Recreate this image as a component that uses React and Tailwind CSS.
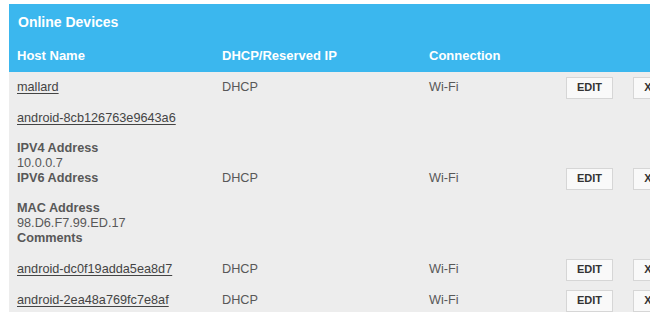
import React from "react";

const devices = [
  { name: "mallard", type: "DHCP", conn: "Wi-Fi" },
  {
    name: "android-8cb126763e9643a6",
    type: "DHCP",
    conn: "Wi-Fi",
    expanded: true,
    ipv4: "10.0.0.7",
    ipv6: "",
    mac: "98.D6.F7.99.ED.17",
    comments: "",
  },
  { name: "android-dc0f19adda5ea8d7", type: "DHCP", conn: "Wi-Fi" },
  { name: "android-2ea48a769fc7e8af", type: "DHCP", conn: "Wi-Fi" },
];

const cols = "grid grid-cols-[204px_207px_137px_67px_1fr]";

const Btn = ({ children, className = "" }) => (
  <button className={`h-[22px] border border-[#d6d6d6] bg-[#f9f9f9] text-[11px] font-bold text-[#333] ${className}`}>
    {children}
  </button>
);

const Row = ({ d }) => (
  <div className={`${cols} items-center ${d.expanded ? "" : "h-[31px]"}`}>
    <div className="pl-[8px]">
      {d.expanded ? (
        <div className="pt-[7.5px] pb-[8.5px] leading-[15px]">
          <a className="underline underline-offset-2 text-[#444]">{d.name}</a>
          <div className="mt-[15px]">
            <div className="font-bold">IPV4 Address</div>
            <div>{d.ipv4}</div>
            <div className="font-bold">IPV6 Address</div>
            <div className="h-[15px]">{d.ipv6}</div>
            <div className="font-bold">MAC Address</div>
            <div>{d.mac}</div>
            <div className="font-bold">Comments</div>
          </div>
        </div>
      ) : (
        <a className="underline underline-offset-2 text-[#444]">{d.name}</a>
      )}
    </div>
    <div className="pl-[9px]">{d.type}</div>
    <div className="pl-[9px]">{d.conn}</div>
    <div className="pl-[9px]">
      <Btn className="w-[47px]">EDIT</Btn>
    </div>
    <div className="pl-[9px]">
      <Btn className="w-[30px]">X</Btn>
    </div>
  </div>
);

export default function App() {
  return (
    <div className="w-[650px] h-[312px] overflow-hidden bg-white pt-[4px] pl-[9px] font-['Liberation_Sans',Arial,sans-serif]">
      <div className="w-[720px]">
        <div className="bg-[#3bb7ee] text-white">
          <div className="h-[36px] flex items-center pl-[9px] text-[14px] font-bold">Online Devices</div>
          <div className={`${cols} h-[32px] items-center text-[13px] font-bold`}>
            <div className="pl-[8px]">Host Name</div>
            <div className="pl-[9px]">DHCP/Reserved IP</div>
            <div className="pl-[9px]">Connection</div>
            <div />
            <div />
          </div>
        </div>
        <div className="bg-[#ededed] text-[12.7px] text-[#585858]">
          {devices.map((d) => (
            <Row key={d.name} d={d} />
          ))}
        </div>
      </div>
    </div>
  );
}
